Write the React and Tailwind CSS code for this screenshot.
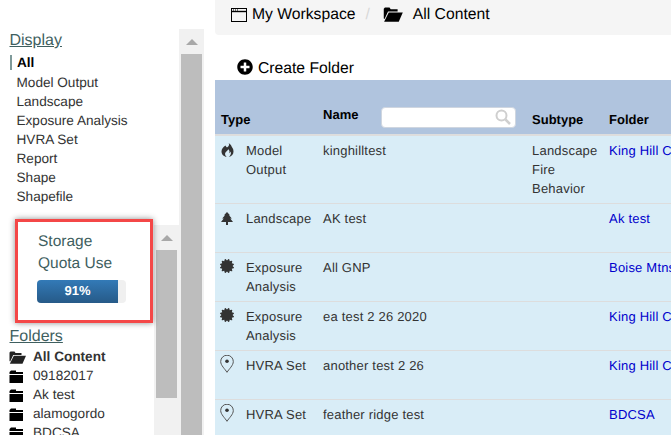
import React from "react";
import { FaCertificate, FaPlusCircle } from "react-icons/fa";

const FolderOpen = ({ className }) => (
  <svg viewBox="0 0 17 13" className={className} fill="currentColor">
    <path d="M1.5 0.5h4l1 1.5h6v2H4.2L1.2 10.500 0.500 10V1.500z" />
    <path d="M4.800 4.800H17l-3.500 8H0.800z" />
  </svg>
);
const FolderClosed = ({ className }) => (
  <svg viewBox="0 0 14 13" className={className} fill="currentColor">
    <path d="M2 0.500h5v1.500h7v2H0.500v-2z" />
    <rect x="0.500" y="5" width="13.500" height="8" />
  </svg>
);
const WindowIcon = ({ className }) => (
  <svg viewBox="0 0 16 14" className={className} fill="none" stroke="currentColor">
    <rect x="0.500" y="0.500" width="15" height="13" />
    <path d="M0.500 3.500h15" strokeWidth="1.400" />
    <path d="M2 2h1M4 2h1M6 2h1" strokeWidth="1" />
  </svg>
);
const Flame = ({ className }) => (
  <svg viewBox="0 0 12 14" className={className} fill="currentColor">
    <path d="M7 0C8.500 1.800 7 3.500 5.500 4.500 4.700 4 4.200 3.300 4 2.500 1.500 4 0 6 0 8.500 0 11.500 2.300 13.500 5.200 14 3.800 12.800 3.200 11.300 3.800 9.800 4.500 8.300 6.300 7.800 6.700 6.200 8 7.200 8.300 8.800 7.700 10.300 8.600 10 9.200 9.400 9.400 8.500 9.800 10 9.300 12.800 7.300 14 10.200 13.500 12 11.300 12 8.500 12 5.500 10.500 5 10 3.300 9.500 2 8.500 0.800 7 0z" />
  </svg>
);
const Tree = ({ className }) => (
  <svg viewBox="0 0 12 13" className={className} fill="currentColor">
    <path d="M6 0l3 3.300H8L10.800 6.500H9.300L12 10H7v3H5v-3H0l2.700-3.500H1.200L4 3.300H3z" />
  </svg>
);
const Pin = ({ className }) => (
  <svg viewBox="0 0 14 18" className={className} fill="none" stroke="currentColor">
    <path d="M7 17.300C5 14 0.700 10.500 0.700 6.500a6.300 6.300 0 0 1 12.600 0C13.300 10.500 9 14 7 17.300z" strokeWidth="1" />
    <circle cx="7" cy="6.200" r="1.800" fill="#333" stroke="none" />
  </svg>
);

const displayItems = ["Model Output", "Landscape", "Exposure Analysis", "HVRA Set", "Report", "Shape", "Shapefile"];
const folders = ["09182017", "Ak test", "alamogordo", "BDCSA"];

const rows = [
  { icon: "flame", type: ["Model", "Output"], name: "kinghilltest", sub: ["Landscape", "Fire", "Behavior"], folder: "King Hill Creek", h: "h-[68px]" },
  { icon: "tree", type: ["Landscape"], name: "AK test", sub: [], folder: "Ak test", h: "h-[49px]" },
  { icon: "cert", type: ["Exposure", "Analysis"], name: "All GNP", sub: [], folder: "Boise Mtns", h: "h-[49px]" },
  { icon: "cert", type: ["Exposure", "Analysis"], name: "ea test 2 26 2020", sub: [], folder: "King Hill Creek", h: "h-[49px]" },
  { icon: "pin", type: ["HVRA Set"], name: "another test 2 26", sub: [], folder: "King Hill Creek", h: "h-[49px]" },
  { icon: "pin", type: ["HVRA Set"], name: "feather ridge test", sub: [], folder: "BDCSA", h: "h-[49px]" },
];

const RowIcon = ({ kind }) => {
  if (kind === "flame") return <Flame className="w-[13px] h-[14px] mt-[2px] ml-[1px]" />;
  if (kind === "tree") return <Tree className="w-[12px] h-[13px] mt-[3px] ml-[1px]" />;
  if (kind === "cert") return <FaCertificate className="w-[14px] h-[14px] mt-[1px]" />;
  return <Pin className="w-[14px] h-[18px] -mt-[1px] text-[#555]" />;
};

const Scrollbar = ({ thumb }) => (
  <div className="w-[25px] h-full bg-[#f1f1f1] flex flex-col items-center shrink-0">
    <div className="h-[25px] flex items-center justify-center shrink-0">
      <div className="w-0 h-0 border-l-[6px] border-r-[6px] border-b-[6px] border-l-transparent border-r-transparent border-b-[#a8a8a8]" />
    </div>
    <div className={`w-[21px] bg-[#bdbdbd] ${thumb}`} />
  </div>
);

export default function App() {
  return (
    <div className="relative flex w-[671px] h-[435px] overflow-hidden bg-white text-[13px] text-[#333] [text-rendering:geometricPrecision] font-['Liberation_Sans',Arial,sans-serif]">
      <aside className="flex w-[215px] h-full shrink-0 text-[13.6px]">
        <div className="w-[179px] h-full flex flex-col shrink-0">
          <div className="h-[225px] shrink-0 pt-[31px]">
            <h2 className="ml-[9.500px] text-[16px] leading-[20px] text-[#3f5f5f] underline">Display</h2>
            <ul className="mt-[4px] leading-[19px]">
              <li className="ml-[10px] pl-[5px] border-l-2 border-[#7f9a9a] font-bold text-black h-[15px] leading-[15px] mb-[3px]">
                All
              </li>
              {displayItems.map((d) => (
                <li key={d} className="pl-[16.500px] h-[19px]">{d}</li>
              ))}
            </ul>
          </div>
          <div className="flex flex-1 min-h-0">
            <div className="w-[154px] shrink-0 overflow-hidden">
              <div className="pl-[38px] pt-[6px] text-[15.500px] leading-[22px] text-[#3f5f5f]">
                Storage
                <br />
                Quota Use
              </div>
              <div className="relative ml-[37px] mt-[5px] w-[89px] h-[23px] rounded-[4px] bg-[#f0f0f0] overflow-hidden">
                <div className="w-[81px] h-full flex items-center justify-center pb-[1px] bg-gradient-to-b from-[#337ab7] to-[#265a88] text-white font-bold text-[13px]">
                  91%
                </div>
              </div>
              <h2 className="ml-[9.500px] mt-[24px] text-[16px] leading-[20px] text-[#3f5f5f] underline">Folders</h2>
              <ul className="mt-[1px]">
                <li className="flex items-center h-[19px] pl-[9px] font-bold">
                  <FolderOpen className="w-[17px] h-[13px] text-[#222] shrink-0" />
                  <span className="ml-[7px]">All Content</span>
                </li>
                {folders.map((f) => (
                  <li key={f} className="flex items-center h-[19px] pl-[9px]">
                    <FolderClosed className="w-[14px] h-[13px] text-black shrink-0" />
                    <span className="ml-[10px]">{f}</span>
                  </li>
                ))}
              </ul>
            </div>
            <Scrollbar thumb="h-[148px]" />
          </div>
        </div>
        <div className="h-full pt-[29px]">
          <Scrollbar thumb="flex-1" />
        </div>
      </aside>

      <main className="flex-1 min-w-0 overflow-hidden">
        <div className="h-[35px] bg-[#f5f5f5] rounded-bl-[4px] flex items-center pl-[16px] pb-[6px] text-[15.700px] text-black">
          <WindowIcon className="w-[16px] h-[14px] mt-[1px]" />
          <span className="ml-[5px]">My Workspace</span>
          <span className="ml-[10px] text-[#d8d8d8]">/</span>
          <FolderOpen className="w-[20px] h-[15px] ml-[13px]" />
          <span className="ml-[10px]">All Content</span>
        </div>
        <div className="h-[45px] flex items-end pl-[22px] pb-[1px] text-[15.700px] text-black">
          <FaPlusCircle className="w-[16px] h-[16px] mb-[4px]" />
          <span className="ml-[5px] leading-[20px]">Create Folder</span>
        </div>
        <table className="table-fixed border-collapse w-[600px]">
          <colgroup>
            <col className="w-[31px]" />
            <col className="w-[77px]" />
            <col className="w-[209px]" />
            <col className="w-[77px]" />
            <col />
          </colgroup>
          <thead>
            <tr className="h-[55px] bg-[#b0c4de] border-b-2 border-[#dddddd] text-black font-bold">
              <th colSpan={2} className="pl-[6px] pb-[5px] align-bottom text-left font-bold">Type</th>
              <th className="pl-0 pb-[7px] align-bottom text-left font-bold">
                <div className="flex items-center">
                  <span className="relative -top-[2px]">Name</span>
                  <div className="relative ml-[23px] w-[135px] h-[21px] bg-white rounded-[4px] border border-[#cfd6e0] -mb-[1px]">
                    <svg viewBox="0 0 16 16" className="absolute right-[4px] top-[1px] w-[16px] h-[16px]" fill="none" stroke="#cfcfcf">
                      <circle cx="6.500" cy="6.500" r="5" strokeWidth="2" />
                      <path d="M10.500 10.500L15 15" strokeWidth="2.500" />
                    </svg>
                  </div>
                </div>
              </th>
              <th className="pb-[5px] align-bottom text-left font-bold">Subtype</th>
              <th className="pb-[5px] align-bottom text-left font-bold whitespace-nowrap">Folder</th>
            </tr>
          </thead>
          <tbody>
            {rows.map((r, i) => (
              <tr key={i} className={`${r.h} bg-[#d9edf7] border-b border-[#dddddd] align-top leading-[19px] text-[#333] tracking-[0.2px]`}>
                <td className="pl-[5px] pt-[5px]">
                  <RowIcon kind={r.icon} />
                </td>
                <td className="pt-[5px]">
                  {r.type.map((t) => (
                    <div key={t}>{t}</div>
                  ))}
                </td>
                <td className="pt-[5px]">{r.name}</td>
                <td className="pt-[5px]">
                  {r.sub.map((t) => (
                    <div key={t}>{t}</div>
                  ))}
                </td>
                <td className="pt-[5px] whitespace-nowrap text-[#0000cc]">{r.folder}</td>
              </tr>
            ))}
          </tbody>
        </table>
      </main>

      <div className="absolute left-[15px] top-[219px] w-[138px] h-[104px] border-[3px] border-[#f44747] shadow-[0_0_6px_rgba(0,0,0,0.45)] pointer-events-none" />
    </div>
  );
}
